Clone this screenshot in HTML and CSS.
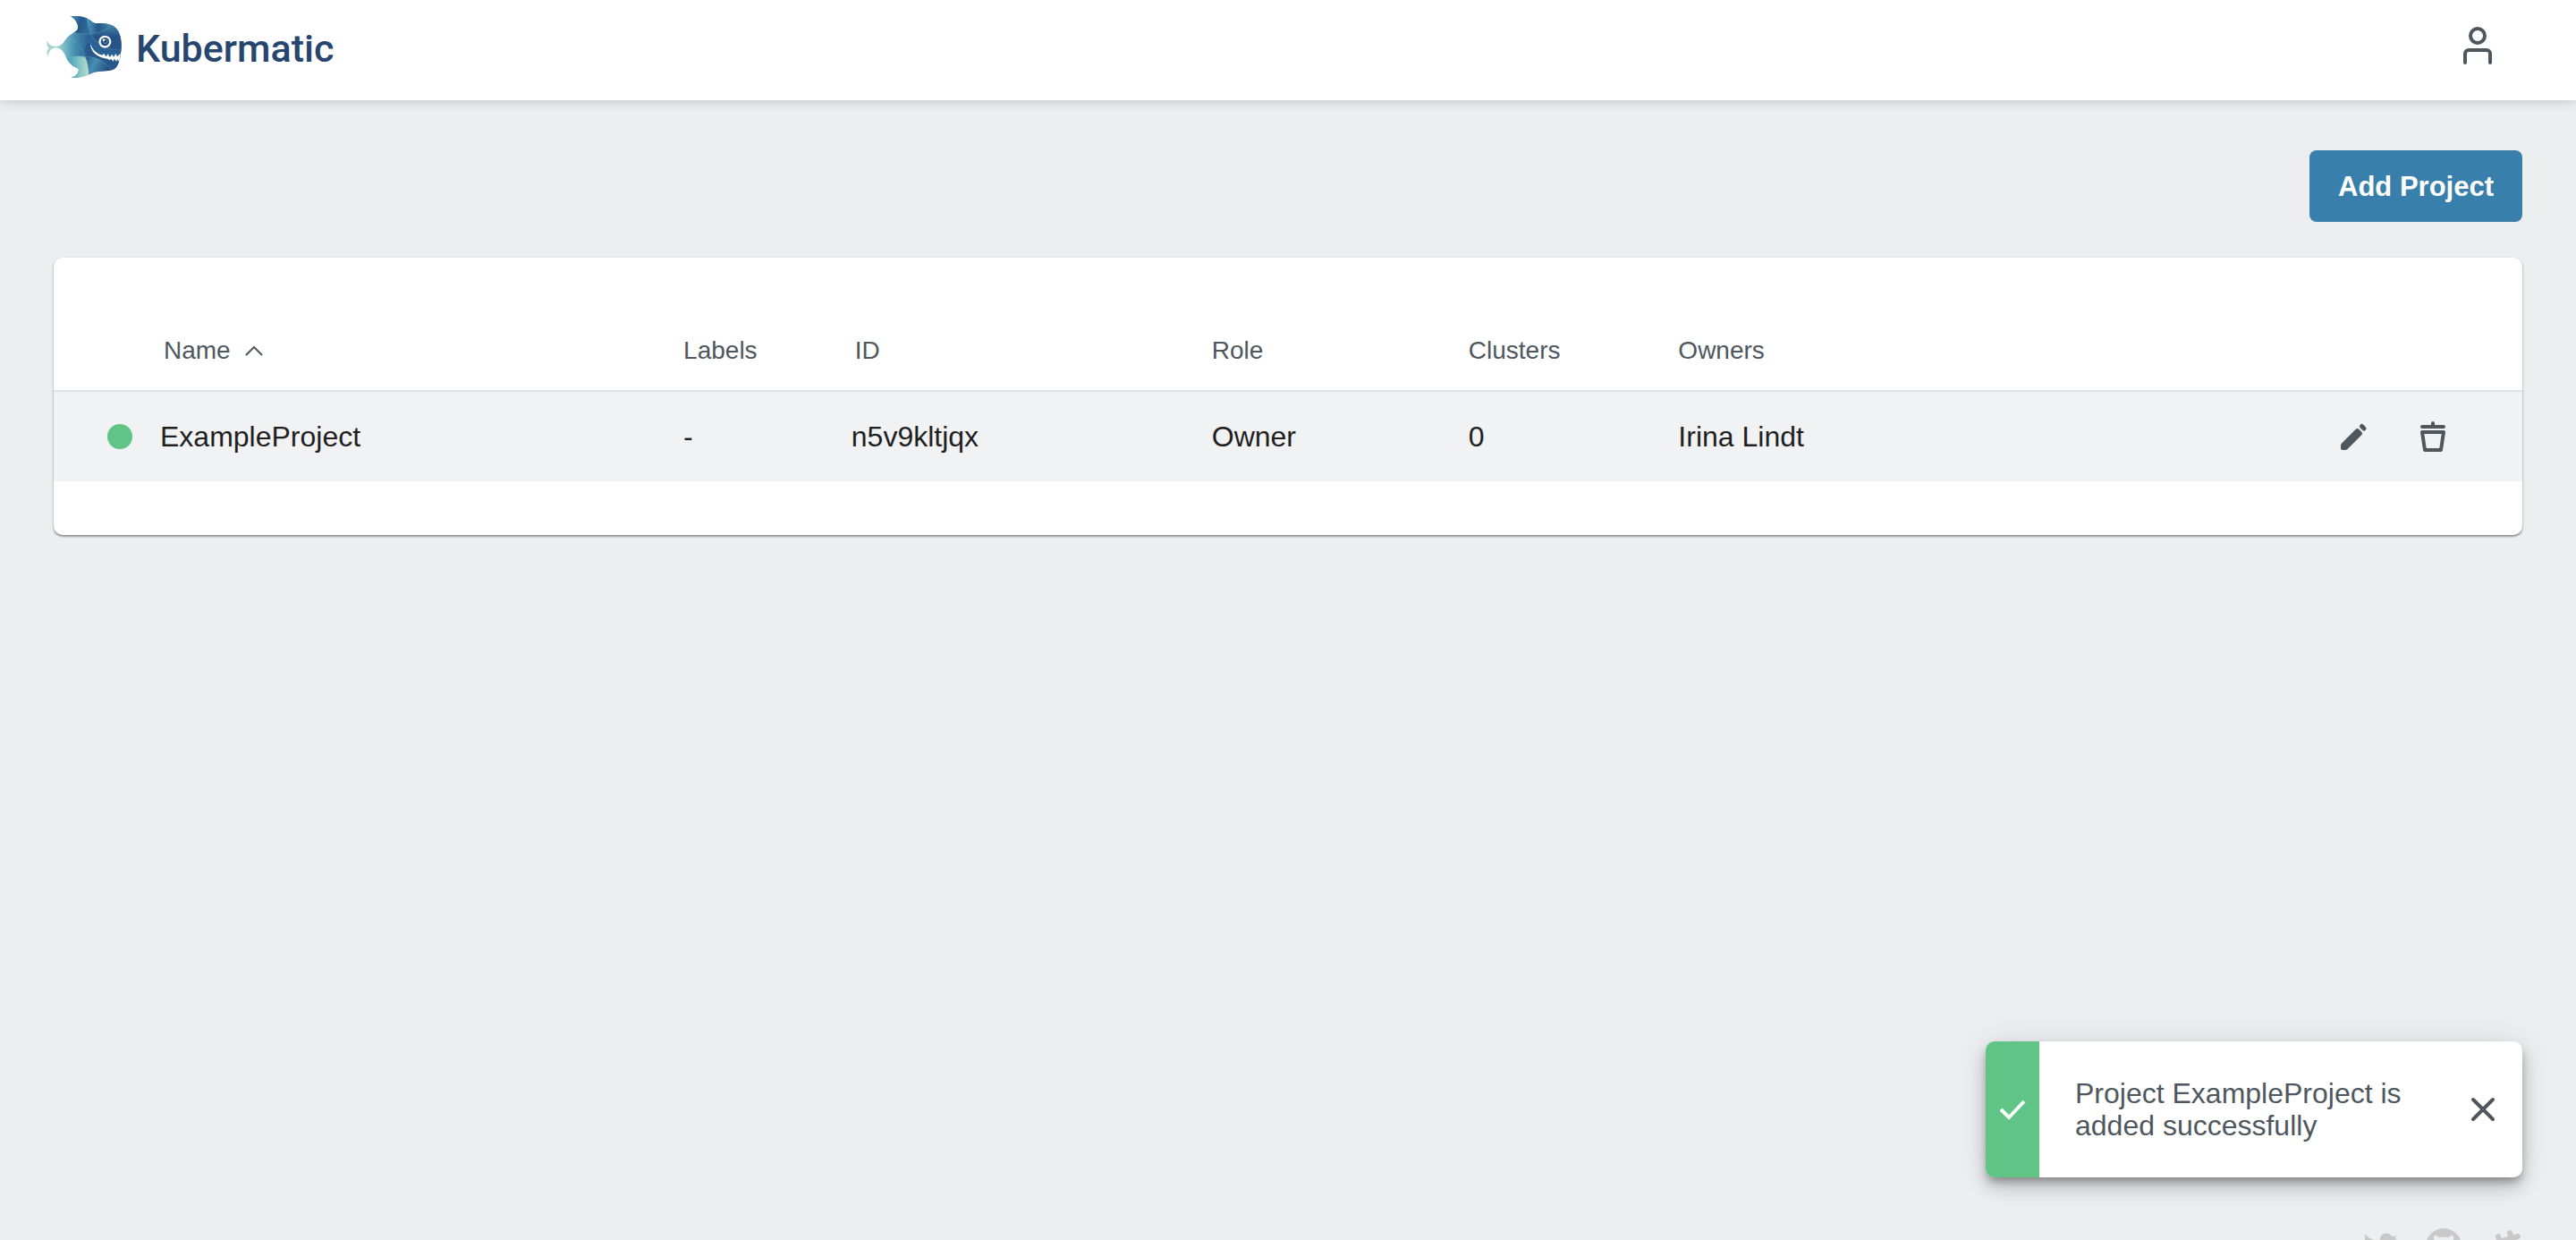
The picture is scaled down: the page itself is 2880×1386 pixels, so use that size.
FILE: index.html
```html
<!DOCTYPE html>
<html lang="en">
<head>
    <meta charset="UTF-8">
    <meta name="viewport" content="width=device-width, initial-scale=1.0">
    <title>Kubermatic</title>
    <link rel="stylesheet" href="styles.css">
</head>
<body>
    <header class="navbar">
        <a href="#" class="brand">
            <svg class="brand-logo" viewBox="6 22 252 210" aria-hidden="true">
                <defs>
                    <linearGradient id="body-fill" x1="0" y1="0" x2="1" y2="0">
                        <stop offset="0" stop-color="#b5dcc8"/>
                        <stop offset="0.2" stop-color="#8cc9cc"/>
                        <stop offset="0.38" stop-color="#4590b0"/>
                        <stop offset="0.55" stop-color="#2c6395"/>
                        <stop offset="1" stop-color="#2a5f92"/>
                    </linearGradient>
                    <linearGradient id="fin-fill" x1="0" y1="0" x2="1" y2="0.3">
                        <stop offset="0" stop-color="#4ea3ba"/>
                        <stop offset="0.6" stop-color="#27578b"/>
                        <stop offset="1" stop-color="#2f6c9c"/>
                    </linearGradient>
                    <linearGradient id="head-fill" x1="0" y1="0" x2="1" y2="0">
                        <stop offset="0" stop-color="#4c9cb7"/>
                        <stop offset="0.45" stop-color="#265589"/>
                        <stop offset="1" stop-color="#3f8cae"/>
                    </linearGradient>
                    <linearGradient id="face-fill" x1="0" y1="0" x2="0" y2="1">
                        <stop offset="0" stop-color="#4a99b6"/>
                        <stop offset="0.5" stop-color="#275488"/>
                        <stop offset="1" stop-color="#285287"/>
                    </linearGradient>
                    <linearGradient id="belly-fill" x1="0" y1="0" x2="1" y2="0">
                        <stop offset="0" stop-color="#3e8db0"/>
                        <stop offset="0.4" stop-color="#5fb0c3"/>
                        <stop offset="1" stop-color="#b9dfc9"/>
                    </linearGradient>
                    <linearGradient id="jaw-fill" x1="0" y1="0" x2="1" y2="0.4">
                        <stop offset="0" stop-color="#29588c"/>
                        <stop offset="0.4" stop-color="#4590b2"/>
                        <stop offset="1" stop-color="#24497f"/>
                    </linearGradient>
                    <clipPath id="fish-shape">
                        <path d="M7 107C14 122 24 127 36 127C52 127 62 117 68 106C76 93 92 83 104 76C113 70 112 61 110 53C106 41 98 33 87 26C112 22 138 27 153 39C160 45 163 49 172 49C196 49 216 50 230 58C250 70 258 98 257 127C256 158 250 188 237 200C222 214 190 206 163 214C142 222 124 234 88 231C104 227 116 216 113 201C95 196 80 181 72 164C66 150 58 134 40 131C24 129 15 141 10 160C5 149 6 140 14 133C8 126 5 117 7 107Z"/>
                    </clipPath>
                </defs>
                <g clip-path="url(#fish-shape)">
                    <path fill="url(#body-fill)" d="M0 0H264V240H0Z"/>
                    <path fill="url(#fin-fill)" d="M80 15H142C142 50 150 68 156 84C130 88 106 84 86 76Z"/>
                    <path fill="url(#head-fill)" d="M142 15H225V57C206 75 182 83 156 84C148 66 142 48 142 15Z"/>
                    <path fill="url(#face-fill)" d="M225 57L264 40V145C238 140 196 138 172 106C164 98 160 92 156 84C184 83 207 75 225 57Z"/>
                    <path fill="url(#belly-fill)" d="M74 166C96 157 116 158 136 162C146 184 148 205 148 240H60Z"/>
                    <path fill="url(#jaw-fill)" d="M136 162C166 160 196 168 222 205L210 235H148C149 205 146 184 136 162Z"/>
                    <path fill="#285287" d="M155 116C170 152 200 176 264 180V220L222 205C196 168 166 160 136 162C130 130 140 110 155 116Z" opacity="0.6"/>
                    <g fill="none" stroke="#7fb4c6" stroke-width="1">
                        <path d="M142 34C143 72 158 98 180 116"/>
                        <path d="M86 77C130 92 192 86 226 56"/>
                        <path d="M70 97C106 106 148 146 148 222"/>
                        <path d="M74 166C130 152 188 160 222 203"/>
                        <path d="M208 130C226 138 240 139 258 139"/>
                    </g>
                </g>
                <path fill="#fff" d="M153 115C158 137 176 153 194 156L198 150L206 161L212 152L218 163L226 153L231 162L238 151L243 160L254 150L250 178L243 169L241 177L233 168L230 177L222 168L218 173L211 168C178 166 152 144 153 115Z"/>
                <circle cx="202" cy="111" r="21" fill="#fff"/>
                <circle cx="202" cy="111" r="14" fill="#234a7d"/>
                <circle cx="203" cy="110" r="8" fill="#5c8bae"/>
                <circle cx="203" cy="110" r="5" fill="#1f4275"/>
                <circle cx="198" cy="105" r="4" fill="#fff"/>
            </svg>
            <span class="brand-name">Kubermatic</span>
        </a>
        <button type="button" class="icon-button" aria-label="User panel">
            <svg width="32" height="44" viewBox="0 0 32 44" fill="none" stroke="currentColor" stroke-width="4">
                <circle cx="16" cy="10" r="8"/>
                <path d="M2 40V30a4 4 0 0 1 4-4h20a4 4 0 0 1 4 4v10" stroke-linecap="round"/>
            </svg>
        </button>
    </header>

    <main class="content">
        <div class="actions-bar">
            <button type="button" class="button-primary">Add Project</button>
        </div>

        <section class="card">
            <table class="project-table">
                <thead>
                    <tr>
                        <th class="col-status" aria-label="Status"></th>
                        <th class="col-name">
                            <button type="button" class="sort-button">
                                Name
                                <svg width="20" height="14" viewBox="0 0 20 14" fill="none" stroke="currentColor" stroke-width="2" aria-hidden="true">
                                    <path d="M1 12L10 3L19 12"/>
                                </svg>
                            </button>
                        </th>
                        <th class="col-labels">Labels</th>
                        <th class="col-id"><button type="button" class="sort-button">ID</button></th>
                        <th class="col-role">Role</th>
                        <th class="col-clusters">Clusters</th>
                        <th class="col-owners">Owners</th>
                        <th class="col-actions" aria-label="Actions"></th>
                    </tr>
                </thead>
                <tbody>
                    <tr>
                        <td><span class="status-dot"></span></td>
                        <td>ExampleProject</td>
                        <td>-</td>
                        <td>n5v9kltjqx</td>
                        <td>Owner</td>
                        <td>0</td>
                        <td>Irina Lindt</td>
                        <td>
                            <div class="row-actions">
                                <button type="button" class="icon-button" aria-label="Edit project">
                                    <svg width="40" height="40" viewBox="0 0 40 40" fill="currentColor">
                                        <path d="M5 30Q5 28.500 6 27.500L21.500 12Q23.500 10 25.500 12L28 14.500Q30 16.500 28 18.500L13.500 33Q12 35 10 35H7Q5 35 5 33Z"/>
                                        <path d="M28.500 8.500L31 11" fill="none" stroke="currentColor" stroke-width="5" stroke-linecap="round"/>
                                    </svg>
                                </button>
                                <button type="button" class="icon-button" aria-label="Delete project">
                                    <svg width="40" height="40" viewBox="0 0 40 40" fill="none" stroke="currentColor" stroke-width="4" stroke-linecap="round" stroke-linejoin="round">
                                        <path d="M8 9H32M20 5V8"/>
                                        <path d="M8 15H32L29 35H11Z"/>
                                    </svg>
                                </button>
                            </div>
                        </td>
                    </tr>
                </tbody>
            </table>
        </section>
    </main>

    <footer class="footer">
        <a href="#" aria-label="Twitter">
            <svg width="40" height="40" viewBox="0 0 40 40" fill="currentColor">
                <path d="M36 11C34.500 11.500 34 11.600 33 11.800C34.500 10.500 34.800 9.500 34.800 8C33 8.600 32 8.800 30.500 9C27 4 18.500 4 17 11C16.800 12 16.800 13 17 14C10 14 4 11 0 6C-2 10 -1 15 3.300 17.800C2.200 17.700 1 17.400 0 16.900C0 20.500 2.500 23.700 6 24.400C5 24.700 3.800 24.700 2.600 24.500C3.500 27.600 6.400 29.700 9.700 29.800C6.500 32.300 3 33.200 -1 32.800C13 41.500 32 34 32 15C33.600 14 35 12.600 36 11Z"/>
            </svg>
        </a>
        <a href="#" aria-label="GitHub">
            <svg width="40" height="40" viewBox="0 0 40 40" fill="currentColor">
                <path d="M20 0a20 20 0 0 0-6.300 39c1 .2 1.400-.4 1.400-1v-3.500c-5.600 1.200-6.800-2.700-6.800-2.700-.9-2.300-2.200-2.900-2.200-2.900-1.800-1.300.1-1.200.1-1.200 2 .1 3.100 2 3.100 2 1.800 3.100 4.700 2.200 5.800 1.700.2-1.300.7-2.200 1.300-2.700-4.400-.5-9.100-2.200-9.100-9.900 0-2.200.8-4 2.100-5.400-.2-.5-.9-2.500.2-5.300 0 0 1.700-.5 5.500 2.100a19 19 0 0 1 10 0c3.800-2.600 5.500-2.100 5.500-2.100 1.100 2.800.4 4.800.2 5.300a8 8 0 0 1 2.100 5.400c0 7.700-4.700 9.400-9.200 9.900.7.600 1.400 1.800 1.400 3.700V38c0 .6.300 1.200 1.300 1A20 20 0 0 0 20 0Z"/>
            </svg>
        </a>
        <a href="#" aria-label="Slack">
            <svg width="40" height="40" viewBox="0 0 40 40" fill="none" stroke="currentColor" stroke-width="6" stroke-linecap="round">
                <path d="M13 9L21 34M26 5L34 30M8 17L35 9M11 30L37 22"/>
            </svg>
        </a>
    </footer>

    <div class="notification" role="status">
        <div class="notification-type">
            <svg width="32" height="24" viewBox="0 0 32 24" fill="none" stroke="currentColor" stroke-width="4" aria-hidden="true">
                <path d="M3 12L12 21L29 3"/>
            </svg>
        </div>
        <p class="notification-message">Project ExampleProject is added successfully</p>
        <button type="button" class="icon-button" aria-label="Close">
            <svg width="28" height="28" viewBox="0 0 28 28" fill="none" stroke="currentColor" stroke-width="4" stroke-linecap="round">
                <path d="M3 3L25 25M25 3L3 25"/>
            </svg>
        </button>
    </div>
</body>
</html>
```

FILE: styles.css
```css
* {
    box-sizing: border-box;
}
body {
    display: flex;
    flex-direction: column;
    height: 100vh;
    margin: 0;
    overflow: hidden;
    background-color: #edeef0;
    color: #1f1f1f;
    font-family: "Liberation Sans", Arial, sans-serif;
    font-size: 32px;
}
button {
    font-family: inherit;
    cursor: pointer;
}
svg {
    display: block;
}

/* Top bar */
.navbar {
    display: flex;
    align-items: center;
    justify-content: space-between;
    height: 112px;
    padding: 0 94px 8px 52px;
    background: white;
    box-shadow: 0 2px 12px rgba(0,0,0,0.16);
}
.brand {
    display: flex;
    align-items: center;
    gap: 16px;
    color: #27466f;
    text-decoration: none;
}
.brand-logo {
    width: 84px;
    height: 70px;
}
.brand-name {
    padding-top: 4px;
    font-family: Roboto, sans-serif;
    font-size: 43px;
    font-weight: 500;
}
.icon-button {
    padding: 0;
    border: none;
    background: none;
    color: #4f575e;
}

/* Content */
.content {
    flex: 1;
    padding: 56px 60px;
}
.actions-bar {
    display: flex;
    justify-content: flex-end;
    margin-bottom: 40px;
}
.button-primary {
    height: 80px;
    padding: 2px 32px 0;
    border: none;
    border-radius: 8px;
    background-color: #387fac;
    color: white;
    font-size: 31px;
    font-weight: bold;
}
.card {
    padding: 60px 0;
    border-radius: 10px;
    background: white;
    box-shadow: 0 1px 3px rgba(0,0,0,0.22), 0 2px 2px rgba(0,0,0,0.28);
}

/* Projects */
.project-table {
    width: 100%;
    border-collapse: separate;
    border-spacing: 0;
    table-layout: fixed;
}
.project-table th,
.project-table td {
    padding: 0;
    text-align: left;
}
.project-table th {
    height: 90px;
    border-bottom: 2px solid #dfe1e4;
    color: #4f575e;
    font-size: 28px;
    font-weight: normal;
}
.project-table td {
    height: 100px;
    background-color: #f1f2f4;
}
.col-status {
    width: 119px;
}
.col-name {
    width: 21.2%;
}
.col-labels {
    width: 6.8%;
}
.col-id {
    width: 14.6%;
}
.col-role {
    width: 10.4%;
}
.col-clusters {
    width: 8.5%;
}
.col-actions {
    width: 260px;
}
.sort-button {
    display: flex;
    align-items: center;
    gap: 16px;
    padding: 0 4px;
    border: none;
    background: none;
    color: inherit;
    font-size: 28px;
}
.status-dot {
    display: block;
    width: 28px;
    height: 28px;
    margin-left: 60px;
    border-radius: 50%;
    background-color: #5fc485;
}
.row-actions {
    display: flex;
    justify-content: flex-end;
    gap: 48px;
    padding-right: 80px;
}

/* Footer */
.footer {
    display: flex;
    justify-content: flex-end;
    gap: 28px;
    height: 13px;
    padding: 0 60px;
    overflow: hidden;
}
.footer a {
    color: #c9c9c9;
}

/* Notification */
.notification {
    position: absolute;
    right: 60px;
    bottom: 70px;
    display: flex;
    align-items: center;
    width: 600px;
    height: 152px;
    padding-right: 30px;
    overflow: hidden;
    border-radius: 10px;
    background: white;
    color: #4f575e;
    box-shadow: 0 6px 10px -2px rgba(0,0,0,0.3), 0 12px 20px rgba(0,0,0,0.16), 0 2px 36px rgba(0,0,0,0.1);
}
.notification-type {
    display: flex;
    align-items: center;
    justify-content: center;
    align-self: stretch;
    width: 60px;
    background-color: #5fc485;
    color: white;
}
.notification-message {
    flex: 1;
    margin: 0;
    padding: 0 40px;
    line-height: 36px;
}
```
